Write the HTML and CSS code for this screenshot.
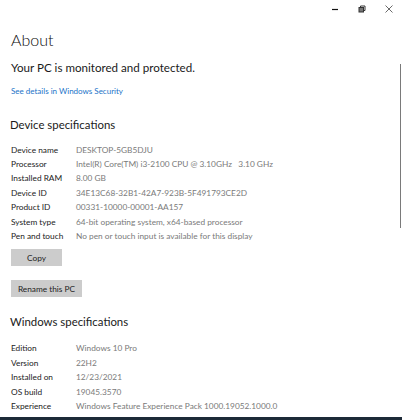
FILE: index.html
```html
<!DOCTYPE html>
<html>
<head>
<meta charset="utf-8">
<link rel="stylesheet" href="styles.css">
</head>
<body>
<div class="window">
  <div class="titlebar">
    <span class="ctl ctl-min"><svg width="8" height="8" viewBox="0 0 8 8"><line x1="1" y1="4.5" x2="7" y2="4.5" stroke="#111" stroke-width="1.2"/></svg></span>
    <span class="ctl ctl-max"><svg width="8" height="8" viewBox="0 0 8 8"><rect x="1" y="2.5" width="4.5" height="4.5" fill="#777" stroke="#333" stroke-width="1"/><polyline points="2.5,2.5 2.5,1 7,1 7,5.5 5.5,5.5" fill="none" stroke="#333" stroke-width="1"/></svg></span>
    <span class="ctl ctl-close"><svg width="8" height="8" viewBox="0 0 8 8"><path d="M0.5 0.5 L7.5 7.5 M7.5 0.5 L0.5 7.5" stroke="#444" stroke-width="0.8"/></svg></span>
  </div>
  <div class="scrollbar"></div>
  <main class="content">
    <h1 class="title">About</h1>
    <p class="status">Your PC is monitored and protected.</p>
    <a class="link" href="#">See details in Windows Security</a>

    <h2 class="section">Device specifications</h2>
    <dl class="specs">
      <dt>Device name</dt><dd>DESKTOP-5GB5DJU</dd>
      <dt>Processor</dt><dd>Intel(R) Core(TM) i3-2100 CPU @ 3.10GHz&nbsp;&nbsp;&nbsp;3.10 GHz</dd>
      <dt>Installed RAM</dt><dd>8.00 GB</dd>
      <dt>Device ID</dt><dd>34E13C68-32B1-42A7-923B-5F491793CE2D</dd>
      <dt>Product ID</dt><dd>00331-10000-00001-AA157</dd>
      <dt>System type</dt><dd>64-bit operating system, x64-based processor</dd>
      <dt>Pen and touch</dt><dd>No pen or touch input is available for this display</dd>
    </dl>
    <button class="btn btn-copy">Copy</button>
    <button class="btn btn-rename">Rename this PC</button>

    <h2 class="section section-win">Windows specifications</h2>
    <dl class="specs specs-win">
      <dt>Edition</dt><dd>Windows 10 Pro</dd>
      <dt>Version</dt><dd>22H2</dd>
      <dt>Installed on</dt><dd>12/23/2021</dd>
      <dt>OS build</dt><dd>19045.3570</dd>
      <dt>Experience</dt><dd>Windows Feature Experience Pack 1000.19052.1000.0</dd>
    </dl>
  </main>
  <div class="taskbar"></div>
</div>
</body>
</html>
```
FILE: styles.css
```css
html, body {
  margin: 0;
  padding: 0;
  background: #fff;
}
body {
  font-family: "Lato", "Open Sans", sans-serif;
  color: #1a1a1a;
}
.window {
  position: relative;
  width: 402px;
  height: 420px;
  overflow: hidden;
  display: flex;
  flex-direction: column;
}
.titlebar {
  height: 18px;
  display: flex;
  justify-content: flex-end;
  align-items: center;
  padding-right: 9px;
  gap: 19px;
}
.ctl {
  width: 8px;
  height: 8px;
  display: flex;
}
.scrollbar {
  position: absolute;
  left: 400px;
  top: 64px;
  width: 1px;
  height: 164px;
  background: #7a7a7a;
}
.content {
  flex: 1;
  padding-left: 11px;
}
.title {
  margin: 10px 0 0 0;
  font-size: 16px;
  line-height: 24px;
  font-weight: 300;
  color: #0a0a0a;
}
.status {
  margin: 6.5px 0 0;
  font-size: 11.6px;
  line-height: 18px;
  font-weight: 400;
  color: #1a1a1a;
}
.link {
  display: block;
  margin-top: 8px;
  font-size: 8px;
  line-height: 12px;
  color: #1a73c8;
  text-decoration: none;
}
.section {
  margin: 19px 0 0 -1px;
  font-size: 11.4px;
  line-height: 18px;
  font-weight: 400;
}
.section-win {
  margin-top: 16px;
}
.specs {
  margin: 9px 0 0;
  display: grid;
  grid-template-columns: 65px auto;
  row-gap: 0;
  font-size: 8.3px;
  line-height: 14.4px;
}
.specs-win {
  margin-top: 10px;
}
.specs dt {
  color: #222;
}
.specs dd {
  margin: 0;
  color: #7a7a7a;
  white-space: nowrap;
}
.btn {
  display: block;
  border: none;
  background: #cccccc;
  font-family: inherit;
  font-size: 8.3px;
  color: #222;
  height: 17px;
  padding: 0;
}
.btn-copy {
  width: 51px;
  margin-top: 6px;
}
.btn-rename {
  width: 71px;
  margin-top: 14px;
}
.taskbar {
  position: absolute;
  left: 0;
  bottom: 0;
  width: 402px;
  height: 3px;
  background: #1d2a38;
}
```
